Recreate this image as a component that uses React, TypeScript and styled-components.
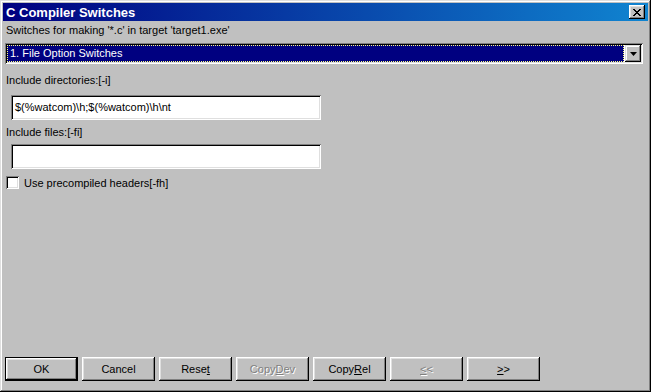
import { createGlobalStyle, styled } from 'styled-components';

const GlobalStyle = createGlobalStyle`
  html, body, #root {
    margin: 0;
    padding: 0;
    width: 100%;
    height: 100%;
  }
  body {
    background: #c0c0c0;
    font-family: "Liberation Sans", Arial, sans-serif;
    font-size: 11px;
    color: #000;
  }
`;

const Window = styled.div`
  box-sizing: border-box;
  width: 651px;
  height: 392px;
  padding: 3px;
  display: flex;
  flex-direction: column;
  background: #c0c0c0;
  box-shadow: inset -1px -1px #000, inset 1px 1px #dfdfdf, inset -2px -2px #808080, inset 2px 2px #fff;
`;

const TitleBar = styled.div`
  height: 18px;
  display: flex;
  align-items: center;
  justify-content: space-between;
  padding: 0 3px 0 3px;
  background: linear-gradient(to right, #000080, #1084d0);
  color: #fff;
  font-weight: bold;
  font-size: 13px;
`;

const CloseBtn = styled.div`
  box-sizing: border-box;
  width: 16px;
  height: 14px;
  display: flex;
  align-items: center;
  justify-content: center;
  background: #c0c0c0;
  box-shadow: inset -1px -1px #000, inset 1px 1px #fff, inset -2px -2px #808080, inset 2px 2px #dfdfdf;
`;

const Body = styled.div`
  flex: 1;
  display: flex;
  flex-direction: column;
  padding: 0 2px;
`;

const Label = styled.div<{ $top: number }>`
  margin-top: ${(p) => p.$top}px;
  padding-left: 1px;
  line-height: 13px;
  height: 13px;
`;

const Combo = styled.div`
  box-sizing: border-box;
  margin-top: 6px;
  width: 638px;
  height: 21px;
  display: flex;
  align-items: center;
  padding: 2px;
  background: #fff;
  box-shadow: inset 1px 1px #808080, inset -1px -1px #fff, inset 2px 2px #000, inset -2px -2px #dfdfdf;
`;

const ComboValue = styled.div`
  flex: 1;
  height: 17px;
  margin-right: 1px;
  box-sizing: border-box;
  background: #000080;
  color: #fff;
  line-height: 15px;
  padding-left: 2px;
  border: 1px dotted #ffff80;
`;

const ArrowBtn = styled.div`
  box-sizing: border-box;
  width: 16px;
  height: 17px;
  display: flex;
  align-items: center;
  justify-content: center;
  background: #c0c0c0;
  box-shadow: inset -1px -1px #000, inset 1px 1px #dfdfdf, inset -2px -2px #808080, inset 2px 2px #fff;
`;

const TextField = styled.div<{ $top: number }>`
  box-sizing: border-box;
  margin-top: ${(p) => p.$top}px;
  margin-left: 6px;
  width: 310px;
  height: 25px;
  padding: 3px 4px;
  background: #fff;
  line-height: 19px;
  box-shadow: inset 1px 1px #808080, inset -1px -1px #fff, inset 2px 2px #000, inset -2px -2px #dfdfdf;
`;

const CheckRow = styled.div`
  margin-top: 7px;
  margin-left: 1px;
  display: flex;
  align-items: center;
  gap: 5px;
`;

const CheckBox = styled.div`
  width: 13px;
  height: 13px;
  box-sizing: border-box;
  background: #fff;
  box-shadow: inset 1px 1px #808080, inset -1px -1px #fff, inset 2px 2px #000, inset -2px -2px #dfdfdf;
`;

const Spacer = styled.div`
  flex: 1;
`;

const ButtonRow = styled.div`
  display: flex;
  gap: 4px;
  margin-bottom: 8px;
`;

const Button = styled.div<{ $default?: boolean; $disabled?: boolean }>`
  box-sizing: border-box;
  width: 73px;
  height: 24px;
  display: flex;
  align-items: center;
  justify-content: center;
  background: #c0c0c0;
  color: ${(p) => (p.$disabled ? '#808080' : '#000')};
  text-shadow: ${(p) => (p.$disabled ? '1px 1px #fff' : 'none')};
  box-shadow: ${(p) =>
    p.$default
      ? 'inset -1px -1px #000, inset 1px 1px #000, inset -2px -2px #000, inset 2px 2px #fff, inset -3px -3px #808080, inset 3px 3px #dfdfdf'
      : 'inset -1px -1px #000, inset 1px 1px #fff, inset -2px -2px #808080, inset 2px 2px #dfdfdf'};
  u {
    text-decoration: underline;
  }
`;

const App = () => {
  return (
    <Window>
      <GlobalStyle />
      <TitleBar>
        <span>C Compiler Switches</span>
        <CloseBtn>
          <svg width="8" height="7" viewBox="0 0 8 7">
            <path
              d="M0 0h2v1h1v1h2v-1h1v-1h2v1h-1v1h-1v1h-1v1h1v1h1v1h1v1h-2v-1h-1v-1h-2v1h-1v1h-2v-1h1v-1h1v-1h1v-1h-1v-1h-1v-1h-1z"
              fill="#000"
            />
          </svg>
        </CloseBtn>
      </TitleBar>
      <Body>
        <Label $top={3}>Switches for making '*.c' in target 'target1.exe'</Label>
        <Combo>
          <ComboValue>1. File Option Switches</ComboValue>
          <ArrowBtn>
            <svg width="7" height="4" viewBox="0 0 7 4">
              <path d="M0 0h7L3.5 4z" fill="#000" />
            </svg>
          </ArrowBtn>
        </Combo>
        <Label $top={10}>Include directories:[-i]</Label>
        <TextField $top={8}>$(%watcom)\h;$(%watcom)\h\nt</TextField>
        <Label $top={6}>Include files:[-fi]</Label>
        <TextField $top={5} />
        <CheckRow>
          <CheckBox />
          <span>Use precompiled headers[-fh]</span>
        </CheckRow>
        <Spacer />
        <ButtonRow>
          <Button $default>OK</Button>
          <Button>Cancel</Button>
          <Button>
            Rese<u>t</u>
          </Button>
          <Button $disabled>
            Copy<u>D</u>ev
          </Button>
          <Button>
            Copy<u>R</u>el
          </Button>
          <Button $disabled>
            <u>&lt;</u>&lt;
          </Button>
          <Button>
            <u>&gt;</u>&gt;
          </Button>
        </ButtonRow>
      </Body>
    </Window>
  );
};

export default App;
